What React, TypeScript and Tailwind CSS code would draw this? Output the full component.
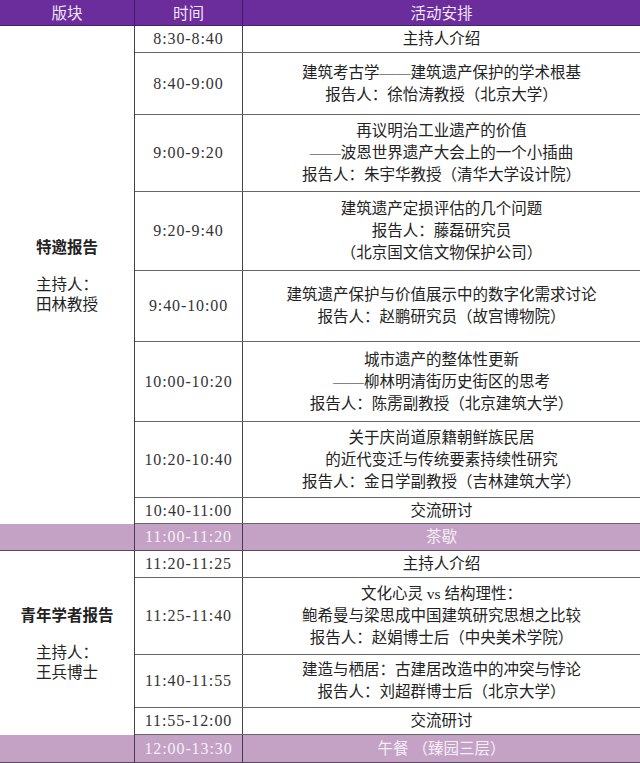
import React from "react"

type Row = { time: string; lines: string[]; h: string }

const cjk = "font-['Liberation_Serif','Noto_Sans_CJK_SC',serif]"
const digits = "font-['Liberation_Serif',serif] text-[16px] tracking-[0.9px]"

const morning: Row[] = [
  { time: "8:30-8:40", lines: ["主持人介绍"], h: "h-[27px]" },
  { time: "8:40-9:00", lines: ["建筑考古学——建筑遗产保护的学术根基", "报告人：徐怡涛教授（北京大学）"], h: "h-[62px]" },
  {
    time: "9:00-9:20",
    lines: ["再议明治工业遗产的价值", "——波恩世界遗产大会上的一个小插曲", "报告人：朱宇华教授（清华大学设计院）"],
    h: "h-[77px]",
  },
  {
    time: "9:20-9:40",
    lines: ["建筑遗产定损评估的几个问题", "报告人：藤磊研究员", "（北京国文信文物保护公司）"],
    h: "h-[79px]",
  },
  { time: "9:40-10:00", lines: ["建筑遗产保护与价值展示中的数字化需求讨论", "报告人：赵鹏研究员（故宫博物院）"], h: "h-[71px]" },
  {
    time: "10:00-10:20",
    lines: ["城市遗产的整体性更新", "——柳林明清街历史街区的思考", "报告人：陈雳副教授（北京建筑大学）"],
    h: "h-[80px]",
  },
  {
    time: "10:20-10:40",
    lines: ["关于庆尚道原籍朝鲜族民居", "的近代变迁与传统要素持续性研究", "报告人：金日学副教授（吉林建筑大学）"],
    h: "h-[76px]",
  },
  { time: "10:40-11:00", lines: ["交流研讨"], h: "h-[26px]" },
]

const noon: Row[] = [
  { time: "11:20-11:25", lines: ["主持人介绍"], h: "h-[27px]" },
  {
    time: "11:25-11:40",
    lines: ["文化心灵 vs 结构理性：", "鲍希曼与梁思成中国建筑研究思想之比较", "报告人：赵娟博士后（中央美术学院）"],
    h: "h-[77px]",
  },
  { time: "11:40-11:55", lines: ["建造与栖居：古建居改造中的冲突与悖论", "报告人：刘超群博士后（北京大学）"], h: "h-[53px]" },
  { time: "11:55-12:00", lines: ["交流研讨"], h: "h-[27px]" },
]

function Section({ title, host, rows }: { title: string; host: string; rows: Row[] }) {
  return (
    <div className="flex">
      <div className="w-[135px] shrink-0 border-r border-[#444] flex flex-col items-center justify-center text-[15.5px] text-[#222]">
        <div className="font-bold font-['Noto_Sans_CJK_SC',sans-serif] leading-[22px]">{title}</div>
        <div className={`${cjk} mt-[18px] leading-[20px] text-center`}>
          <div>主持人：</div>
          <div>{host}</div>
        </div>
      </div>
      <div className="flex-1 flex flex-col">
        {rows.map((r) => (
          <div key={r.time} className={`flex ${r.h} border-b border-[#666]`}>
            <div className={`w-[108px] shrink-0 border-r border-[#444] flex items-center justify-center ${digits} text-[#333]`}>
              {r.time}
            </div>
            <div className={`flex-1 flex flex-col items-center justify-center ${cjk} text-[15.5px] leading-[22px] text-[#222]`}>
              {r.lines.map((l) => (
                <div key={l} className="whitespace-nowrap">{l}</div>
              ))}
            </div>
          </div>
        ))}
      </div>
    </div>
  )
}

function Break({ time, label, h }: { time: string; label: string; h: string }) {
  return (
    <div className={`flex ${h} bg-[#c4a2c6] border-b border-[#5a4660] text-[#f6eef6]`}>
      <div className="w-[135px] shrink-0 border-r border-[#4a3a50]" />
      <div className={`w-[108px] shrink-0 border-r border-[#4a3a50] flex items-center justify-center ${digits}`}>
        {time}
      </div>
      <div className={`flex-1 flex items-center justify-center ${cjk} text-[15.5px] whitespace-pre`}>{label}</div>
    </div>
  )
}

export default function App() {
  return (
    <div className="w-[640px] h-[763px] overflow-hidden bg-white">
      <div className="flex h-[26px] bg-[#6b2c9c] text-[#f1e6f8] font-['Noto_Sans_CJK_SC',sans-serif] text-[15.5px] border-b border-[#4a2070]">
        <div className="w-[135px] shrink-0 border-r border-[#3e1a60] flex items-center justify-center">版块</div>
        <div className="w-[108px] shrink-0 border-r border-[#3e1a60] flex items-center justify-center">时间</div>
        <div className="flex-1 flex items-center justify-center">活动安排</div>
      </div>
      <Section title="特邀报告" host="田林教授" rows={morning} />
      <Break time="11:00-11:20" label="茶歇" h="h-[27px]" />
      <Section title="青年学者报告" host="王兵博士" rows={noon} />
      <Break time="12:00-13:30" label="午餐 （臻园三层）" h="h-[28px]" />
    </div>
  )
}
